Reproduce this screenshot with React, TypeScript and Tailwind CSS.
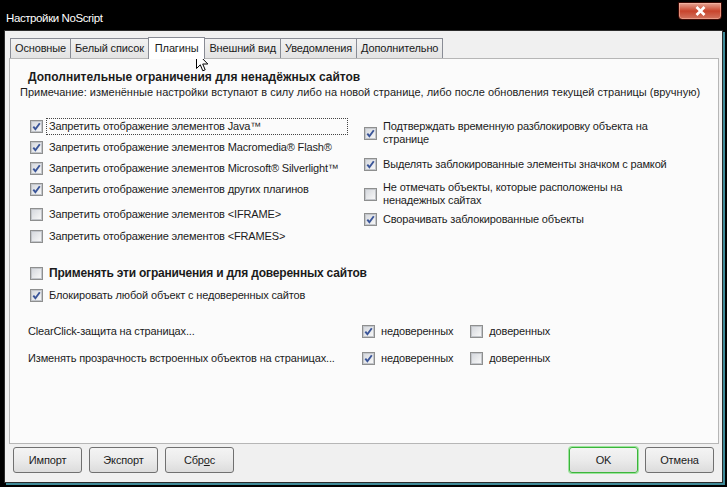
import type { ReactNode } from 'react'

const FONT = "font-['Liberation_Sans',Arial,sans-serif]"

function Box({ checked }: { checked?: boolean }) {
  return (
    <span className="flex h-[13px] w-[13px] shrink-0 items-center justify-center border border-[#8e8f8f] bg-white">
      <span className="flex h-[11px] w-[11px] items-center justify-center border border-[#c3c6cb] bg-gradient-to-br from-[#d6d9de] to-[#f7f7f7]">
        {checked && (
          <svg width="9" height="9" viewBox="0 0 9 9">
            <path d="M1.3 4.6 L3.4 7.2 L7.8 1.2" fill="none" stroke="#3a5599" strokeWidth="1.9" />
          </svg>
        )}
      </span>
    </span>
  )
}

function Check({
  checked,
  children,
  bold,
  focus,
  className = '',
}: {
  checked?: boolean
  children: ReactNode
  bold?: boolean
  focus?: boolean
  className?: string
}) {
  return (
    <div className={`flex items-center gap-[3px] ${className}`}>
      <Box checked={checked} />
      <span
        className={`whitespace-nowrap leading-[13px] ${
          bold ? 'text-[12px] font-bold tracking-[-0.2px]' : ''
        } ${focus ? 'w-[302px] border border-dotted border-[#444] px-[2px] py-[1px]' : 'px-[3px]'}`}
      >
        {children}
      </span>
    </div>
  )
}

function Tab({ label, active }: { label: string; active?: boolean }) {
  if (active)
    return (
      <div className="relative z-10 -mx-[1px] mb-[-1px] flex h-[22px] items-center border border-b-0 border-[#898c95] bg-white px-[6px]">
        {label}
      </div>
    )
  return (
    <div className="flex h-[20px] items-center border border-b-0 border-[#898c95] bg-gradient-to-b from-[#f2f2f2] to-[#e3e3e3] px-[4px] [&+&]:border-l-0">
      {label}
    </div>
  )
}

function Button({ children, ok }: { children: ReactNode; ok?: boolean }) {
  return (
    <div
      className={`flex h-[26px] w-[69px] items-center justify-center rounded-[3px] border bg-gradient-to-b from-[#f4f4f4] via-[#ebebeb] to-[#dcdcdc] ${
        ok ? 'border-[#3cb43c] shadow-[0_0_0_1px_#9be59b]' : 'border-[#707070]'
      }`}
    >
      {children}
    </div>
  )
}

export default function App() {
  return (
    <div
      className={`relative flex h-[487px] w-[727px] flex-col bg-black text-[11px] tracking-[-0.15px] text-[#1b1b1b] ${FONT}`}
    >
      {/* title bar */}
      <div className="flex h-[30px] items-start">
        <span className="mt-[10px] pl-[6px] text-[11.5px] tracking-[-0.4px] text-white">Настройки NoScript</span>
        <div className="ml-auto mr-[5px] mt-[2px] flex h-[18px] w-[44px] items-center justify-center rounded-b-[4px] border border-[#3b0a05] bg-gradient-to-b from-[#e6a595] via-[#c8432b] to-[#d2735e] shadow-[inset_0_0_0_1px_rgba(255,200,180,0.5)]">
          <svg width="11" height="10" viewBox="0 0 11 10">
            <path d="M1.5 1 L9.5 9 M9.5 1 L1.5 9" stroke="#fff" strokeWidth="2.6" />
          </svg>
        </div>
      </div>

      {/* window body */}
      <div className="mx-[4px] mb-[4px] flex flex-1 flex-col border border-[#2c2c2c] bg-[#f0f0f0] shadow-[2px_2px_0_0_#3f8a98]">
        <div className="ml-[5px] mt-[6px] flex items-end">
          <Tab label="Основные" />
          <Tab label="Белый список" />
          <Tab label="Плагины" active />
          <Tab label="Внешний вид" />
          <Tab label="Уведомления" />
          <Tab label="Дополнительно" />
        </div>

        <div className="ml-[4px] mr-[3px] h-[386px] border border-[#b6b6b6] bg-[#fbfbfb] pt-[11px]">
          <div className="pl-[18px] text-[12px] font-bold leading-[14px] tracking-normal">
            Дополнительные ограничения для ненадёжных сайтов
          </div>
          <div className="mt-[1px] whitespace-nowrap pl-[10px] leading-[14px] tracking-normal">
            Примечание: изменённые настройки вступают в силу либо на новой странице, либо после обновления текущей
            страницы (вручную)
          </div>

          <div className="mt-[17px] flex">
            <div className="w-[354px] pl-[20px]">
              <Check checked focus className="h-[21px]">
                Запретить отображение элементов Java™
              </Check>
              <Check checked className="h-[21px]">
                Запретить отображение элементов Macromedia® Flash®
              </Check>
              <Check checked className="h-[21px]">
                Запретить отображение элементов Microsoft® Silverlight™
              </Check>
              <Check checked className="h-[21px]">
                Запретить отображение элементов других плагинов
              </Check>
              <Check className="h-[28px]">Запретить отображение элементов &lt;IFRAME&gt;</Check>
              <Check className="h-[16px]">Запретить отображение элементов &lt;FRAMES&gt;</Check>
            </div>
            <div className="pt-[1px]">
              <Check checked className="h-[32px]">
                Подтверждать временную разблокировку объекта на
                <br />
                странице
              </Check>
              <Check checked className="h-[30px]">
                Выделять заблокированные элементы значком с рамкой
              </Check>
              <Check className="h-[30px]">
                Не отмечать объекты, которые расположены на
                <br />
                ненадежных сайтах
              </Check>
              <Check checked className="h-[20px]">
                Сворачивать заблокированные объекты
              </Check>
            </div>
          </div>

          <div className="mt-[19px] pl-[20px]">
            <Check bold className="h-[20px]">
              Применять эти ограничения и для доверенных сайтов
            </Check>
            <Check checked className="h-[24px]">
              Блокировать любой объект с недоверенных сайтов
            </Check>
          </div>

          <div className="mt-[12px] flex h-[24px] items-center">
            <span className="w-[352px] pl-[18px]">ClearClick-защита на страницах...</span>
            <Check checked>недоверенных</Check>
            <Check className="ml-[14px]">доверенных</Check>
          </div>
          <div className="mt-[3px] flex h-[24px] items-center">
            <span className="w-[352px] pl-[18px]">Изменять прозрачность встроенных объектов на страницах...</span>
            <Check checked>недоверенных</Check>
            <Check className="ml-[14px]">доверенных</Check>
          </div>
        </div>

        <div className="mx-[8px] mt-[3px] flex gap-[7px]">
          <Button>Импорт</Button>
          <Button>Экспорт</Button>
          <Button>
            <span>
              Сбр<span className="underline">о</span>с
            </span>
          </Button>
          <div className="ml-auto flex gap-[7px]">
            <Button ok>OK</Button>
            <Button>Отмена</Button>
          </div>
        </div>
      </div>

      {/* mouse pointer over the tabs */}
      <svg className="absolute left-[196px] top-[52px]" width="13" height="21" viewBox="0 0 13 21">
        <path
          d="M0.5 0.5 L0.5 16.5 L4.3 12.8 L6.8 18.8 L9.2 17.8 L6.7 12 L11.8 12 Z"
          fill="#fff"
          stroke="#000"
          strokeWidth="1"
          strokeLinejoin="miter"
        />
      </svg>
    </div>
  )
}
